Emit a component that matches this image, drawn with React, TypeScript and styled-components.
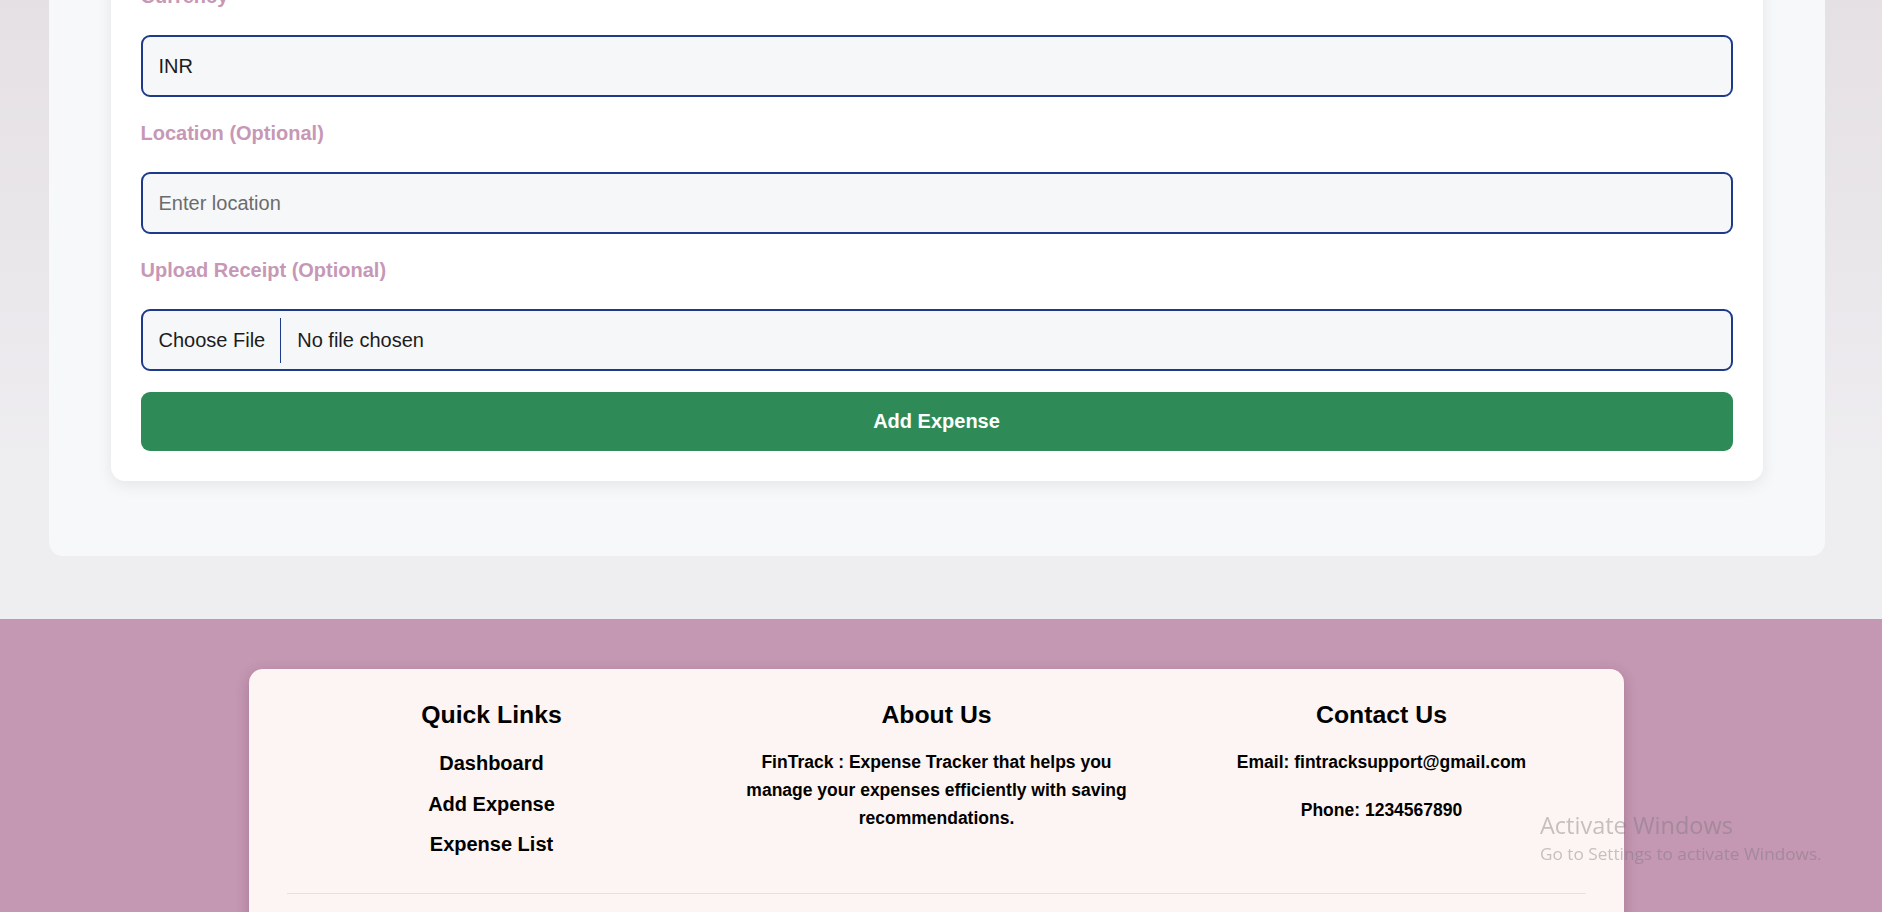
import React from "react";
import styled, { createGlobalStyle } from "styled-components";

const GlobalStyle = createGlobalStyle`
  html, body {
    margin: 0;
    padding: 0;
    overflow: hidden;
  }
  body {
    font-family: "Liberation Sans", Arial, sans-serif;
    background: #eeedf0;
  }
  *, *::before, *::after {
    box-sizing: border-box;
  }
`;

const Main = styled.main`
  margin-top: -85px;
  padding: 0 9px 63px 0;
  background: linear-gradient(180deg, #e3dee2 0%, #e9e6ea 45%, #eeedf0 80%);
`;

const Panel = styled.section`
  width: 1776px;
  margin: 0 auto;
  padding: 40px 62px 75px;
  background: #f7f8fa;
  border-radius: 14px;
`;

const Card = styled.div`
  background: #ffffff;
  border-radius: 14px;
  padding: 30px;
  box-shadow: 0 4px 16px rgba(0, 0, 0, 0.08);
`;

const Form = styled.form`
  display: flex;
  flex-direction: column;
`;

const Field = styled.div`
  display: flex;
  flex-direction: column;
  gap: 27px;
  margin-bottom: 25px;

  &:last-of-type {
    margin-bottom: 21px;
  }
`;

const Label = styled.label`
  font-size: 20px;
  line-height: 23px;
  font-weight: 700;
  color: #c698b6;
`;

const TextInput = styled.input`
  height: 62px;
  width: 100%;
  padding: 0 16px;
  font-family: "Liberation Sans", Arial, sans-serif;
  font-size: 20px;
  color: #1c1c1c;
  background: #f6f7f9;
  border: 2px solid #1e3a8a;
  border-radius: 9px;
  outline: none;

  &::placeholder {
    color: #6b6b6b;
  }
`;

const FileBox = styled.label`
  height: 62px;
  display: flex;
  align-items: center;
  padding: 0 16px;
  font-size: 20px;
  color: #1c1c1c;
  background: #f6f7f9;
  border: 2px solid #1e3a8a;
  border-radius: 9px;
  cursor: pointer;

  input {
    display: none;
  }
`;

const ChooseText = styled.span`
  display: flex;
  align-items: center;
  height: 45px;
  padding-right: 15px;
  margin-right: 16px;
  border-right: 1px solid #1e3a8a;
`;

const FileName = styled.span`
  white-space: nowrap;
`;

const SubmitButton = styled.button`
  height: 59px;
  width: 100%;
  border: none;
  border-radius: 9px;
  background: #2e8b57;
  color: #ffffff;
  font-family: "Liberation Sans", Arial, sans-serif;
  font-size: 20px;
  font-weight: 700;
  cursor: pointer;
`;

const Footer = styled.footer`
  background: #c497b3;
  padding: 50px 9px 0 0;
`;

const FooterCard = styled.div`
  width: 1375px;
  margin: 0 auto;
  padding: 32px 20px 60px;
  background: #fdf5f3;
  border-radius: 14px 14px 0 0;
  box-shadow: 0 4px 14px rgba(60, 20, 45, 0.22);
`;

const Columns = styled.div`
  display: flex;
`;

const Column = styled.div`
  flex: 1;
  display: flex;
  flex-direction: column;
  align-items: center;
  text-align: center;
  color: #000;
`;

const ColumnTitle = styled.h3`
  margin: 0 0 19px;
  font-size: 24.8px;
  line-height: 28px;
  font-weight: 700;
`;

const LinkList = styled.ul`
  list-style: none;
  margin: 0;
  padding: 0;
  display: flex;
  flex-direction: column;
  gap: 10.5px;
`;

const FooterLink = styled.a`
  display: block;
  font-size: 20px;
  line-height: 30px;
  font-weight: 700;
  color: #000;
  text-decoration: none;
`;

const FooterText = styled.p`
  margin: 0;
  max-width: 400px;
  font-size: 17.5px;
  line-height: 28px;
  font-weight: 700;

  & + & {
    margin-top: 20px;
  }
`;

const Divider = styled.hr`
  margin: 34px 18px 0;
  border: 0;
  border-top: 1px solid #ecdedc;
`;

const Watermark = styled.div`
  position: fixed;
  left: 1540px;
  top: 809px;
  font-family: "Open Sans", "Noto Sans", sans-serif;
  color: rgba(120, 120, 120, 0.42);
  pointer-events: none;
`;

const WatermarkTitle = styled.div`
  font-size: 23.5px;
  line-height: 32px;
`;

const WatermarkSub = styled.div`
  font-size: 17.2px;
  line-height: 26px;
`;

export default function App() {
  return (
    <>
      <GlobalStyle />
      <Main>
        <Panel>
          <Card>
            <Form onSubmit={(e) => e.preventDefault()}>
              <Field>
                <Label htmlFor="currency">Currency</Label>
                <TextInput id="currency" type="text" defaultValue="INR" />
              </Field>
              <Field>
                <Label htmlFor="location">Location (Optional)</Label>
                <TextInput id="location" type="text" placeholder="Enter location" />
              </Field>
              <Field>
                <Label htmlFor="receipt">Upload Receipt (Optional)</Label>
                <FileBox>
                  <input id="receipt" type="file" />
                  <ChooseText>Choose File</ChooseText>
                  <FileName>No file chosen</FileName>
                </FileBox>
              </Field>
              <SubmitButton type="submit">Add Expense</SubmitButton>
            </Form>
          </Card>
        </Panel>
      </Main>
      <Footer>
        <FooterCard>
          <Columns>
            <Column>
              <ColumnTitle>Quick Links</ColumnTitle>
              <LinkList>
                <li>
                  <FooterLink href="#">Dashboard</FooterLink>
                </li>
                <li>
                  <FooterLink href="#">Add Expense</FooterLink>
                </li>
                <li>
                  <FooterLink href="#">Expense List</FooterLink>
                </li>
              </LinkList>
            </Column>
            <Column>
              <ColumnTitle>About Us</ColumnTitle>
              <FooterText>
                FinTrack : Expense Tracker that helps you manage your expenses efficiently with saving
                recommendations.
              </FooterText>
            </Column>
            <Column>
              <ColumnTitle>Contact Us</ColumnTitle>
              <FooterText>Email: fintracksupport@gmail.com</FooterText>
              <FooterText>Phone: 1234567890</FooterText>
            </Column>
          </Columns>
          <Divider />
        </FooterCard>
      </Footer>
      <Watermark>
        <WatermarkTitle>Activate Windows</WatermarkTitle>
        <WatermarkSub>Go to Settings to activate Windows.</WatermarkSub>
      </Watermark>
    </>
  );
}
